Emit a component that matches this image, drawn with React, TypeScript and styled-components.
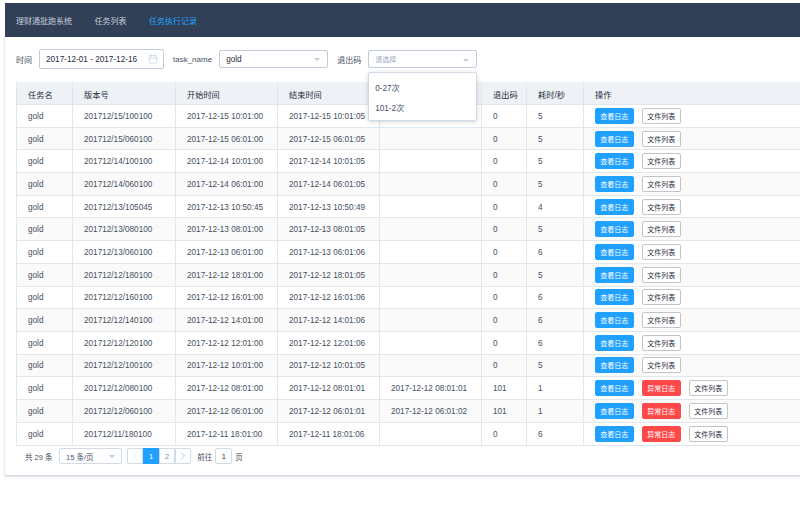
import React from 'react';
import styled, { createGlobalStyle } from 'styled-components';
import { Calendar, ChevronLeft, ChevronRight } from 'lucide-react';

const GlobalStyle = createGlobalStyle`
  html, body {
    margin: 0;
    padding: 0;
    background: #fff;
    overflow: hidden;
  }
  * {
    box-sizing: border-box;
  }
  #root {
    width: 800px;
    height: 507px;
    overflow: hidden;
    font-family: "Liberation Sans", "Noto Sans CJK SC", sans-serif;
    font-size: 8.2px;
    color: #464f5e;
  }
`;

const columns = '56px 103px 102px 102px 102px 45px 57px 1fr';

const rows = [
  ['201712/15/100100', '2017-12-15 10:01:00', '2017-12-15 10:01:05', '', '0', '5'],
  ['201712/15/060100', '2017-12-15 06:01:00', '2017-12-15 06:01:05', '', '0', '5'],
  ['201712/14/100100', '2017-12-14 10:01:00', '2017-12-14 10:01:05', '', '0', '5'],
  ['201712/14/060100', '2017-12-14 06:01:00', '2017-12-14 06:01:05', '', '0', '5'],
  ['201712/13/105045', '2017-12-13 10:50:45', '2017-12-13 10:50:49', '', '0', '4'],
  ['201712/13/080100', '2017-12-13 08:01:00', '2017-12-13 08:01:05', '', '0', '5'],
  ['201712/13/060100', '2017-12-13 06:01:00', '2017-12-13 06:01:06', '', '0', '6'],
  ['201712/12/180100', '2017-12-12 18:01:00', '2017-12-12 18:01:05', '', '0', '5'],
  ['201712/12/160100', '2017-12-12 16:01:00', '2017-12-12 16:01:06', '', '0', '6'],
  ['201712/12/140100', '2017-12-12 14:01:00', '2017-12-12 14:01:06', '', '0', '6'],
  ['201712/12/120100', '2017-12-12 12:01:00', '2017-12-12 12:01:06', '', '0', '6'],
  ['201712/12/100100', '2017-12-12 10:01:00', '2017-12-12 10:01:05', '', '0', '5'],
  ['201712/12/080100', '2017-12-12 08:01:00', '2017-12-12 08:01:01', '2017-12-12 08:01:01', '101', '1'],
  ['201712/12/060100', '2017-12-12 06:01:00', '2017-12-12 06:01:01', '2017-12-12 06:01:02', '101', '1'],
  ['201712/11/180100', '2017-12-11 18:01:00', '2017-12-11 18:01:06', '', '0', '6'],
];

export default function App() {
  return (
    <Page>
      <GlobalStyle />
      <Nav>
        <NavItem>理财通批跑系统</NavItem>
        <NavItem>任务列表</NavItem>
        <NavItem active>任务执行记录</NavItem>
      </Nav>
      <Card>
        <Filters>
          <Label>时间</Label>
          <DateInput>
            <span>2017-12-01 - 2017-12-16</span>
            <Calendar size={10} color="#bfcbd9" strokeWidth={1.5} />
          </DateInput>
          <Label>task_name</Label>
          <Select>
            <span>gold</span>
            <Caret />
          </Select>
          <Label>退出码</Label>
          <SelectWrap>
            <Select>
              <Placeholder>请选择</Placeholder>
              <Caret up />
            </Select>
            <Dropdown>
              <Option>0-27次</Option>
              <Option>101-2次</Option>
            </Dropdown>
          </SelectWrap>
        </Filters>
        <Table>
          <HeadRow>
            <Cell>任务名</Cell>
            <Cell>版本号</Cell>
            <Cell>开始时间</Cell>
            <Cell>结束时间</Cell>
            <Cell />
            <Cell>退出码</Cell>
            <Cell>耗时/秒</Cell>
            <Cell>操作</Cell>
          </HeadRow>
          {rows.map((r, i) => (
            <Row key={i} striped={i % 2 === 1}>
              <Cell>gold</Cell>
              {r.map((v, j) => (
                <Cell key={j}>{v}</Cell>
              ))}
              <ActionCell>
                <Button kind="primary">查看日志</Button>
                {i >= 12 && <Button kind="danger">异常日志</Button>}
                <Button>文件列表</Button>
              </ActionCell>
            </Row>
          ))}
        </Table>
        <Pagination>
          <Total>共 29 条</Total>
          <PageSize>
            <span>15 条/页</span>
            <Caret />
          </PageSize>
          <Pager>
            <PageBtn muted>
              <ChevronLeft size={12} strokeWidth={1.1} />
            </PageBtn>
            <PageBtn active>1</PageBtn>
            <PageBtn>2</PageBtn>
            <PageBtn>
              <ChevronRight size={12} strokeWidth={1.1} />
            </PageBtn>
          </Pager>
          <Jump>前往</Jump>
          <JumpInput>1</JumpInput>
          <Jump>页</Jump>
        </Pagination>
      </Card>
    </Page>
  );
}

const Page = styled.div`
  width: 900px;
  padding: 3px 0 0 5px;
`;

const Nav = styled.div`
  display: flex;
  align-items: center;
  height: 34px;
  padding-left: 11px;
  gap: 22.5px;
  background-color: #324057;
`;

const NavItem = styled.div<{ active?: boolean }>`
  font-size: 8px;
  color: ${props => (props.active ? '#20a0ff' : '#c0ccda')};
`;

const Card = styled.div`
  height: 439px;
  padding: 12px 0 0 11px;
  background: #fff;
  border-left: 1px solid #e4e8f0;
  border-bottom: 1px solid #d3dce6;
  border-radius: 0 0 0 3px;
  margin-left: -1px;
  box-shadow: 0 1px 2px rgba(50, 64, 87, 0.15);
`;

const Filters = styled.div`
  display: flex;
  align-items: center;
  height: 20px;
  margin-bottom: 13px;
`;

const Label = styled.span`
  font-size: 8px;
  margin-right: 7px;
  &:not(:first-child) {
    margin-left: 9px;
  }
`;

const DateInput = styled.div`
  display: flex;
  align-items: center;
  justify-content: space-between;
  width: 125px;
  height: 20px;
  padding: 0 5px 0 6px;
  color: #1f2d3d;
  border: 1px solid #bfcbd9;
  border-radius: 2px;
`;

const Select = styled.div`
  display: flex;
  align-items: center;
  justify-content: space-between;
  width: 109px;
  height: 18px;
  padding: 0 7px 0 6px;
  color: #1f2d3d;
  border: 1px solid #bfcbd9;
  border-radius: 2px;
`;

const SelectWrap = styled.div`
  position: relative;
`;

const Placeholder = styled.span`
  color: #97a8be;
  font-size: 7px;
`;

const Caret = styled.i<{ up?: boolean }>`
  width: 0;
  height: 0;
  border-left: 3.5px solid transparent;
  border-right: 3.5px solid transparent;
  ${props => (props.up ? 'border-bottom' : 'border-top')}: 3.5px solid #bfcbd9;
`;

const Dropdown = styled.div`
  position: absolute;
  z-index: 2;
  top: 22px;
  left: 0;
  width: 109px;
  height: 49px;
  padding-top: 4px;
  background: #fff;
  border: 1px solid #d1dbe5;
  border-radius: 2px;
  box-shadow: 0 1px 4px rgba(0, 0, 0, 0.16);
`;

const Option = styled.div`
  display: flex;
  align-items: center;
  height: 20px;
  padding-left: 6px;
`;

const Table = styled.div`
  margin-right: -20px;
  border-left: 1px solid #dfe6ec;
  border-bottom: 1px solid #dfe6ec;
`;

const HeadRow = styled.div`
  display: grid;
  grid-template-columns: ${columns};
  height: 23px;
  color: #1f2d3d;
  background-color: #eef1f6;
  border-bottom: 1px solid #dfe6ec;
`;

const Row = styled.div<{ striped?: boolean }>`
  display: grid;
  grid-template-columns: ${columns};
  height: 22.7px;
  background-color: ${props => (props.striped ? '#fafafa' : '#fff')};
  border-bottom: 1px solid #dfe6ec;
  &:last-child {
    border-bottom: 0;
  }
`;

const Cell = styled.div`
  display: flex;
  align-items: center;
  padding: 1px 0 0 11px;
  border-right: 1px solid #dfe6ec;
  white-space: nowrap;
`;

const ActionCell = styled(Cell)`
  gap: 8.5px;
  padding-top: 0;
  border-right: 0;
`;

const Button = styled.div<{ kind?: 'primary' | 'danger' }>`
  display: flex;
  align-items: center;
  justify-content: center;
  width: 38.5px;
  height: 16px;
  font-size: 7px;
  border-radius: 2px;
  color: ${props => (props.kind ? '#fff' : '#1f2d3d')};
  background-color: ${props =>
    props.kind === 'primary' ? '#20a0ff' : props.kind === 'danger' ? '#ff4949' : '#fff'};
  border: 1px solid
    ${props =>
      props.kind === 'primary' ? '#20a0ff' : props.kind === 'danger' ? '#ff4949' : '#c4c4c4'};
`;

const Pagination = styled.div`
  display: flex;
  align-items: center;
  height: 16px;
  margin-top: 2px;
  padding-left: 9px;
  font-size: 7.5px;
`;

const Total = styled.span`
  margin-right: 6.5px;
`;

const PageSize = styled.div`
  display: flex;
  align-items: center;
  justify-content: space-between;
  width: 63px;
  height: 16px;
  padding: 0 6px;
  border: 1px solid #d1dbe5;
  border-radius: 2px;
  color: #48576a;
`;

const Pager = styled.div`
  display: flex;
  margin-left: 5px;
`;

const PageBtn = styled.div<{ active?: boolean; muted?: boolean }>`
  display: flex;
  align-items: center;
  justify-content: center;
  width: 16.3px;
  height: 16px;
  margin-left: -0.3px;
  border: 1px solid ${props => (props.active ? '#20a0ff' : '#d1dbe5')};
  color: ${props => (props.active ? '#fff' : props.muted ? '#d1dbe5' : '#7b8797')};
  background-color: ${props => (props.active ? '#20a0ff' : '#fff')};
  &:first-child {
    margin-left: 0;
    border-radius: 2px 0 0 2px;
  }
  &:last-child {
    border-radius: 0 2px 2px 0;
  }
`;

const Jump = styled.span`
  margin-left: 6px;
`;

const JumpInput = styled.div`
  display: flex;
  align-items: center;
  justify-content: center;
  width: 17px;
  height: 16px;
  margin: 0 -3px 0 3px;
  color: #1f2d3d;
  border: 1px solid #d1dbe5;
  border-radius: 2px;
`;
